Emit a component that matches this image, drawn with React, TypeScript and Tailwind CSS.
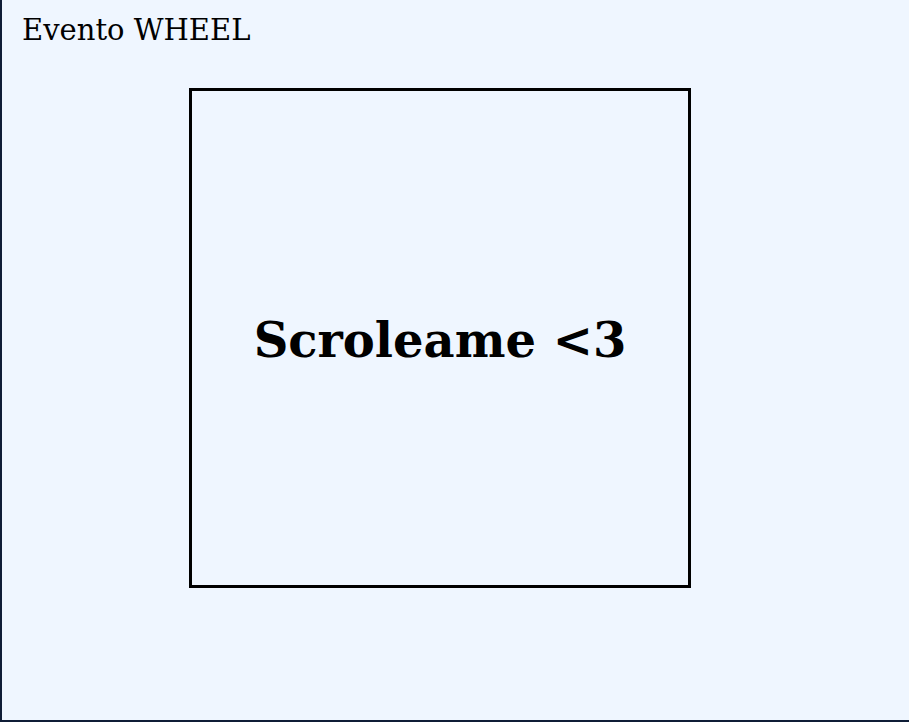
export default function App() {
  return (
    <div
      className="h-[722px] w-full bg-[#eff6ff] border-l-2 border-b-2 border-[#0f1d36] flex flex-col"
      style={{ fontFamily: '"DejaVu Serif", "Liberation Serif", serif' }}
    >
      <h1 className="pl-5 pt-[12px] text-[29px] leading-[36px] text-black">Evento WHEEL</h1>
      <div className="ml-[187px] mt-[40px] w-[502px] h-[500px] border-[3px] border-black flex items-center justify-center">
        <p className="text-[48px] leading-[56px] font-bold text-black pt-[4px]">Scroleame &lt;3</p>
      </div>
    </div>
  );
}
